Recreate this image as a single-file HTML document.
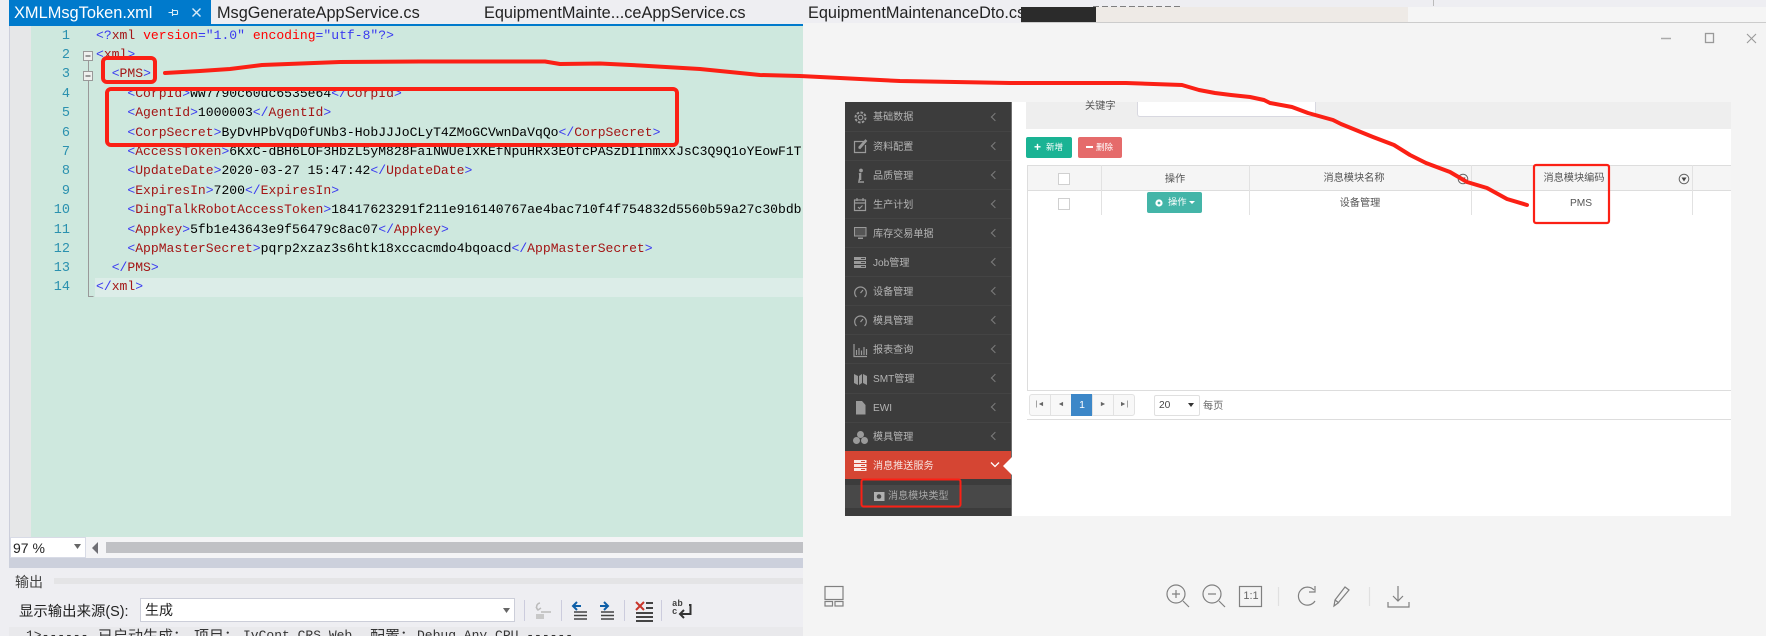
<!DOCTYPE html>
<html lang="zh"><head><meta charset="utf-8"><title>XML</title>
<style>
html,body{margin:0;padding:0;background:#eeeef2}
#p{position:relative;width:1766px;height:636px;overflow:hidden;background:#eeeef2;font-family:"Liberation Sans","Noto Sans CJK SC",sans-serif}
#p div,#p svg{position:absolute}
.tab{top:2px;font-size:16.3px;line-height:22px;color:#222;white-space:nowrap}
.ln{left:40px;width:30px;margin-top:1px;text-align:right;color:#2b91af;font:13.5px/20px "Liberation Mono",monospace}
.c{left:96px;width:707px;overflow:hidden;font:13.07px/20px "Liberation Mono","Noto Sans CJK SC",monospace;white-space:pre;color:#000}
.c b{font-weight:normal;color:#3a3af0}.c i{font-style:normal;color:#a31515}.c u{text-decoration:none;color:#f00}
.m{left:873px;font-size:10.1px;line-height:20px;color:#b4b4b4;white-space:nowrap}
.sep{left:845px;width:166px;height:1px;background:#444}
.ch{left:992px;width:5px;height:5px;border-left:1px solid #7c7c7c;border-bottom:1px solid #7c7c7c;transform:rotate(45deg)}
.t{font-size:10.2px;line-height:20px;color:#555;white-space:nowrap;text-align:center}
.ic{fill:none;stroke:#9a9a9a;stroke-width:1.2}
.cb{width:10px;height:10px;border:1px solid #d0d0d0;background:#fff}
.pg{top:394px;width:20px;height:20px;border:1px solid #e2e2e2;background:#f8f8f8;color:#666;font-size:7px;line-height:20px;text-align:center}
.v{background:#ccd}
.o{top:626px;font:13px/20px "Liberation Mono",monospace;color:#333;white-space:nowrap}
.oc{top:627px;font:15px/20px "Liberation Sans","Noto Sans CJK SC",sans-serif;color:#333;white-space:nowrap}
</style></head><body><div id="p">

<!-- tabs -->
<div style="left:9px;top:0;width:202px;height:25px;background:#007acc"></div>
<div class="tab" style="left:14px;color:#fff;font-size:16.4px">XMLMsgToken.xml</div>
<svg style="left:168px;top:7px" width="11" height="11"><path d="M0.500 5.500h3.500M4.500 2v7M4.500 3.500h5M4.500 7.500h5M9.500 3.500v4" fill="none" stroke="#d8ecf8" stroke-width="1.100"/></svg>
<svg style="left:191px;top:7px" width="12" height="12"><path d="M1.500 1.500l8 8M9.500 1.500l-8 8" stroke="#d8ecf8" stroke-width="1.400"/></svg>
<div class="tab" style="left:217px">MsgGenerateAppService.cs</div>
<div class="tab" style="left:484px">EquipmentMainte...ceAppService.cs</div>
<div class="tab" style="left:808px">EquipmentMaintenanceDto.cs</div>
<div style="left:9px;top:24px;width:794px;height:2px;background:#007acc"></div>

<!-- editor -->
<div style="left:9px;top:26px;width:1px;height:532px;background:#cccedb"></div>
<div style="left:10px;top:26px;width:21px;height:511px;background:#e6e7e8"></div>
<div style="left:31px;top:26px;width:772px;height:511px;background:#cee8de"></div>
<div style="left:95px;top:278px;width:708px;height:19px;background:#dcede8"></div>

<div class="ln" style="top:26px">1</div><div class="ln" style="top:45px">2</div><div class="ln" style="top:64px">3</div><div class="ln" style="top:84px">4</div><div class="ln" style="top:103px">5</div><div class="ln" style="top:123px">6</div><div class="ln" style="top:142px">7</div><div class="ln" style="top:161px">8</div><div class="ln" style="top:181px">9</div><div class="ln" style="top:200px">10</div><div class="ln" style="top:220px">11</div><div class="ln" style="top:239px">12</div><div class="ln" style="top:258px">13</div><div class="ln" style="top:277px">14</div>

<svg style="left:80px;top:45px" width="16" height="256"><rect x="3.500" y="6.500" width="9" height="9" fill="#eef0ee" stroke="#999"/><path d="M5.500 11h5" stroke="#444"/><rect x="3.500" y="26.500" width="9" height="9" fill="#eef0ee" stroke="#999"/><path d="M5.500 31h5" stroke="#444"/><path d="M8.500 16v10M8.500 36v215.500h5" fill="none" stroke="#999"/></svg>

<div class="c" style="top:26px"><b>&lt;?</b><i>xml</i> <u>version</u><b>="1.0"</b> <u>encoding</u><b>="utf-8"?&gt;</b></div>
<div class="c" style="top:45px"><b>&lt;</b><i>xml</i><b>&gt;</b></div>
<div class="c" style="top:64px">  <b>&lt;</b><i>PMS</i><b>&gt;</b></div>
<div class="c" style="top:84px">    <b>&lt;</b><i>CorpId</i><b>&gt;</b>ww7790c60dc6535e64<b>&lt;/</b><i>CorpId</i><b>&gt;</b></div>
<div class="c" style="top:103px">    <b>&lt;</b><i>AgentId</i><b>&gt;</b>1000003<b>&lt;/</b><i>AgentId</i><b>&gt;</b></div>
<div class="c" style="top:123px">    <b>&lt;</b><i>CorpSecret</i><b>&gt;</b>ByDvHPbVqD0fUNb3-HobJJJoCLyT4ZMoGCVwnDaVqQo<b>&lt;/</b><i>CorpSecret</i><b>&gt;</b></div>
<div class="c" style="top:142px">    <b>&lt;</b><i>AccessToken</i><b>&gt;</b>6KxC-dBH6LOF3HbzL5yM828FaiNWUeIxKEfNpuHRx3EOfcPASzDIInmxxJsC3Q9Q1oYEowF1T</div>
<div class="c" style="top:161px">    <b>&lt;</b><i>UpdateDate</i><b>&gt;</b>2020-03-27 15:47:42<b>&lt;/</b><i>UpdateDate</i><b>&gt;</b></div>
<div class="c" style="top:181px">    <b>&lt;</b><i>ExpiresIn</i><b>&gt;</b>7200<b>&lt;/</b><i>ExpiresIn</i><b>&gt;</b></div>
<div class="c" style="top:200px">    <b>&lt;</b><i>DingTalkRobotAccessToken</i><b>&gt;</b>18417623291f211e916140767ae4bac710f4f754832d5560b59a27c30bdb</div>
<div class="c" style="top:220px">    <b>&lt;</b><i>Appkey</i><b>&gt;</b>5fb1e43643e9f56479c8ac07<b>&lt;/</b><i>Appkey</i><b>&gt;</b></div>
<div class="c" style="top:239px">    <b>&lt;</b><i>AppMasterSecret</i><b>&gt;</b>pqrp2xzaz3s6htk18xccacmdo4bqoacd<b>&lt;/</b><i>AppMasterSecret</i><b>&gt;</b></div>
<div class="c" style="top:258px">  <b>&lt;/</b><i>PMS</i><b>&gt;</b></div>
<div class="c" style="top:277px"><b>&lt;/</b><i>xml</i><b>&gt;</b></div>

<!-- zoom + scrollbar -->
<div style="left:10px;top:537px;width:793px;height:21px;background:#f4f4f6"></div>
<div style="left:10px;top:537px;width:74px;height:19px;background:#fff;border:1px solid #d8dbe6"></div>
<div style="left:13px;top:538px;font-size:14px;line-height:20px;color:#222">97 %</div>
<svg style="left:74px;top:544px" width="8" height="6"><path d="M0 0h7l-3.500 5z" fill="#666"/></svg>
<svg style="left:91px;top:541px" width="8" height="14"><path d="M7 1v12L1 7z" fill="#6e6e74"/></svg>
<div style="left:106px;top:542px;width:697px;height:11px;background:#c0c1c5"></div>
<div style="left:9px;top:558px;width:794px;height:10px;background:#ccd0dc"></div>

<!-- output panel -->
<div style="left:15px;top:572px;font-size:14px;line-height:20px;color:#444">输出</div>
<div style="left:54px;top:578px;width:749px;height:6px;background-image:radial-gradient(#c4c4c4 0.6px,transparent 0.7px);background-size:2px 2px"></div>
<div style="left:19px;top:602px;font-size:14.4px;line-height:20px;color:#222;white-space:nowrap">显示输出来源(S):</div>
<div style="left:140px;top:598px;width:373px;height:22px;background:#fff;border:1px solid #ccced9"></div>
<div style="left:145px;top:600px;font-size:14px;line-height:20px;color:#222">生成</div>
<svg style="left:503px;top:608px" width="8" height="6"><path d="M0 0h7l-3.500 5z" fill="#666"/></svg>
<div class="v" style="left:524px;top:600px;width:1px;height:21px"></div>
<div class="v" style="left:561px;top:600px;width:1px;height:21px"></div>
<div class="v" style="left:624px;top:600px;width:1px;height:21px"></div>
<div class="v" style="left:661px;top:600px;width:1px;height:21px"></div>
<svg style="left:533px;top:600px" width="20" height="22"><path d="M7 3a4 4 0 0 0-2 7M3 7l2 3 3-2" fill="none" stroke="#bbb" stroke-width="1.500"/><path d="M8 12h10" stroke="#bbb" stroke-width="1.500"/><path d="M3 14h8v5H3z" fill="#c8c8c8"/></svg>
<svg style="left:571px;top:600px" width="18" height="22"><path d="M10 6H3M6 2L2 6l4 4" fill="none" stroke="#0e5fa8" stroke-width="2"/><path d="M3 12h13M3 15.500h13M3 19h13" stroke="#444" stroke-width="1.600"/></svg>
<svg style="left:598px;top:600px" width="18" height="22"><path d="M2 6h7M6 2l4 4-4 4" fill="none" stroke="#0e5fa8" stroke-width="2"/><path d="M3 12h13M3 15.500h13M3 19h13" stroke="#444" stroke-width="1.600"/></svg>
<svg style="left:635px;top:600px" width="20" height="24"><path d="M1 2l8 8M9 2l-8 8" stroke="#c8352b" stroke-width="2"/><path d="M11 3h7M11 8h7M1 13h17M1 17h17M1 21h17" stroke="#444" stroke-width="2"/></svg>
<div style="left:672px;top:600px;font:bold 9px/8px 'Liberation Mono',monospace;color:#444">ab<br>c</div>
<svg style="left:678px;top:603px" width="14" height="16"><path d="M11 2h1.500v9H3M6 7l-4 4 4 4" fill="none" stroke="#333" stroke-width="2"/></svg>
<div style="left:9px;top:627px;width:794px;height:9px;background:#e9e9ec"></div>
<div class="o" style="left:26px">1&gt;------</div>
<div class="oc" style="left:98px">已启动生成：</div>
<div class="oc" style="left:194px">项目：</div>
<div class="o" style="left:243px">IvCont.CRS.Web,</div>
<div class="oc" style="left:370px">配置：</div>
<div class="o" style="left:417px">Debug Any CPU ------</div>

<!-- viewer -->
<div style="left:803px;top:23px;width:963px;height:613px;background:#f4f4f4"></div>
<div style="left:1021px;top:7px;width:745px;height:15px;background:#f5f5f5"></div>
<div style="left:1096px;top:7px;width:312px;height:15px;background:#eeeae6"></div>
<div style="left:1021px;top:7px;width:75px;height:15px;background:#2b2b2b"></div>
<div style="left:1093px;top:5.500px;width:88px;height:1.500px;opacity:.6;background:repeating-linear-gradient(90deg,#333 0 6px,transparent 6px 9px)"></div>
<div style="left:1021px;top:22px;width:745px;height:1px;background:#ccc"></div>
<div style="left:1433px;top:0;width:1px;height:6px;background:#bbb"></div>
<svg style="left:1655px;top:28px" width="105" height="20"><path d="M6 10.500h10" stroke="#aaa" stroke-width="1.500"/><rect x="50.500" y="5.500" width="8" height="9" fill="none" stroke="#999" stroke-width="1.300"/><path d="M92 6l9 9M101 6l-9 9" stroke="#999" stroke-width="1.100"/></svg>

<!-- screenshot in viewer -->
<div style="left:1012px;top:102px;width:719px;height:414px;background:#fff"></div>
<div style="left:1026px;top:102px;width:705px;height:27px;background:#eee"></div>
<div class="t" style="left:1085px;top:97px;color:#555">关键字</div>
<div style="left:1137px;top:102px;width:177px;height:14px;background:#fff;border:1px solid #d8d8e0;border-top:0;border-radius:0 0 3px 3px"></div>

<div style="left:1026px;top:137px;width:46px;height:21px;background:#1ab394;border-radius:2px"></div>
<div style="left:1034px;top:137px;color:#fff;font:bold 12px/21px 'Liberation Sans',sans-serif">+</div>
<div class="t" style="left:1046px;top:137px;color:#fff;font-size:8.500px">新增</div>
<div style="left:1078px;top:137px;width:44px;height:21px;background:#e56b6b;border-radius:2px"></div>
<div style="left:1086px;top:146px;width:7px;height:2px;background:#fff"></div>
<div class="t" style="left:1096px;top:137px;color:#fff;font-size:8.500px">删除</div>

<div style="left:1027px;top:165px;width:704px;height:25px;background:#f5f5f5"></div>
<div style="left:1027px;top:165px;width:704px;height:1px;background:#ddd"></div>
<div style="left:1027px;top:190px;width:704px;height:1px;background:#ddd"></div>
<div style="left:1027px;top:165px;width:1px;height:255px;background:#ddd"></div>
<div style="left:1101px;top:165px;width:1px;height:50px;background:#e2e2e2"></div>
<div style="left:1249px;top:165px;width:1px;height:50px;background:#e2e2e2"></div>
<div style="left:1471px;top:165px;width:1px;height:50px;background:#e2e2e2"></div>
<div style="left:1692px;top:165px;width:1px;height:50px;background:#e2e2e2"></div>
<div class="cb" style="left:1058px;top:173px"></div>
<div class="cb" style="left:1058px;top:198px"></div>
<div class="t" style="left:1155px;top:170px;width:40px">操作</div>
<div class="t" style="left:1314px;top:169px;width:80px">消息模块名称</div>
<div class="t" style="left:1534px;top:169px;width:80px">消息模块编码</div>
<svg style="left:1457px;top:173px" width="12" height="12"><circle cx="6" cy="6" r="4.800" fill="none" stroke="#666"/><path d="M3.500 4.500h5L6 8.500z" fill="#444"/></svg>
<svg style="left:1678px;top:173px" width="12" height="12"><circle cx="6" cy="6" r="4.800" fill="none" stroke="#666"/><path d="M3.500 4.500h5L6 8.500z" fill="#444"/></svg>
<div style="left:1147px;top:192px;width:55px;height:21px;background:#44b5a8;border-radius:2px"></div>
<svg style="left:1154px;top:198px" width="10" height="10"><circle cx="5" cy="5" r="2.500" fill="none" stroke="#fff" stroke-width="2.200"/></svg>
<div class="t" style="left:1168px;top:192px;color:#fff;font-size:9.300px">操作</div>
<svg style="left:1189px;top:201px" width="6" height="4"><path d="M0 0h6L3 3z" fill="#fff"/></svg>
<div class="t" style="left:1320px;top:194px;width:80px">设备管理</div>
<div class="t" style="left:1561px;top:194px;width:40px">PMS</div>

<div style="left:1027px;top:390px;width:704px;height:1px;background:#ddd"></div>
<div style="left:1027px;top:391px;width:704px;height:28px;background:#fff"></div>
<div style="left:1027px;top:419px;width:704px;height:1px;background:#ddd"></div>
<div class="pg" style="left:1029px;border-radius:3px 0 0 3px">|◄</div>
<div class="pg" style="left:1050px">◄</div>
<div class="pg" style="left:1071px;background:#3c87c8;border-color:#3c87c8;color:#fff;font-size:10.500px">1</div>
<div class="pg" style="left:1092px">►</div>
<div class="pg" style="left:1113px;border-radius:0 3px 3px 0">►|</div>
<div style="left:1154px;top:395px;width:44px;height:19px;background:#fff;border:1px solid #e0e0e0;border-radius:2px"></div>
<div class="t" style="left:1159px;top:396px;color:#444">20</div>
<svg style="left:1188px;top:403px" width="7" height="5"><path d="M0 0h6L3 4z" fill="#333"/></svg>
<div class="t" style="left:1203px;top:397px;color:#666">每页</div>

<!-- sidebar -->
<div style="left:845px;top:102px;width:166px;height:414px;background:#3c3c3c"></div>
<div style="left:1011px;top:102px;width:1px;height:414px;background:#707070"></div>
<div class="sep" style="top:131px"></div><div class="sep" style="top:160px"></div><div class="sep" style="top:189px"></div><div class="sep" style="top:218px"></div><div class="sep" style="top:247px"></div><div class="sep" style="top:276px"></div><div class="sep" style="top:305px"></div><div class="sep" style="top:334px"></div><div class="sep" style="top:363px"></div><div class="sep" style="top:393px"></div><div class="sep" style="top:422px"></div>

<div class="m" style="top:108px">基础数据</div><div class="ch" style="top:114px"></div>
<div class="m" style="top:138px">资料配置</div><div class="ch" style="top:143px"></div>
<div class="m" style="top:167px">品质管理</div><div class="ch" style="top:172px"></div>
<div class="m" style="top:196px">生产计划</div><div class="ch" style="top:201px"></div>
<div class="m" style="top:225px">库存交易单据</div><div class="ch" style="top:230px"></div>
<div class="m" style="top:254px">Job管理</div><div class="ch" style="top:259px"></div>
<div class="m" style="top:283px">设备管理</div><div class="ch" style="top:288px"></div>
<div class="m" style="top:312px">模具管理</div><div class="ch" style="top:317px"></div>
<div class="m" style="top:341px">报表查询</div><div class="ch" style="top:346px"></div>
<div class="m" style="top:370px">SMT管理</div><div class="ch" style="top:375px"></div>
<div class="m" style="top:399px">EWI</div><div class="ch" style="top:404px"></div>
<div class="m" style="top:428px">模具管理</div><div class="ch" style="top:433px"></div>

<div style="left:845px;top:451px;width:166px;height:28px;background:#d54533"></div>
<div class="m" style="top:457px;color:#f6e3df">消息推送服务</div>
<svg style="left:990px;top:461px" width="10" height="8"><path d="M1 1.500l4 4 4-4" fill="none" stroke="#fff" stroke-width="1.300"/></svg>
<svg style="left:1003px;top:457px" width="9" height="18"><path d="M9 0v18L0 9z" fill="#fff"/></svg>
<div style="left:845px;top:485px;width:166px;height:23px;background:#484848"></div>
<div class="m" style="left:888px;top:487px;color:#a8a8a8">消息模块类型</div>

<!-- sidebar icons -->
<svg class="ic" style="left:853px;top:110px" width="15" height="15"><circle cx="7.500" cy="7.500" r="2.300"/><circle cx="7.500" cy="7.500" r="5" stroke-dasharray="2.500 1.400" stroke-width="2"/></svg>
<svg class="ic" style="left:853px;top:139px" width="15" height="15"><path d="M11 2.500H1.500v11h11V6"/><path d="M6 9l1 .5L13.500 2 12.500 1 6 8z" fill="#9a9a9a"/></svg>
<svg class="ic" style="left:853px;top:168px" width="15" height="16"><path d="M7.500 5v7M5 14h6M6 13c1-3 1-6 .5-8" stroke-width="1.600"/><circle cx="8" cy="2.500" r="1.300" fill="#9a9a9a"/></svg>
<svg class="ic" style="left:853px;top:197px" width="15" height="15"><rect x="1.500" y="3" width="11" height="10.500"/><path d="M1.500 6h11M4 1v3M10 1v3M5 10l1.500 1.500L9.500 8.500"/></svg>
<svg style="left:853px;top:226px" width="15" height="15"><path d="M1 1h12.500v9.500H1zM5 11.500h5v1.500H5z" fill="#9a9a9a"/><rect x="2" y="2" width="10.500" height="7.500" fill="#555"/></svg>
<svg style="left:853px;top:256px" width="15" height="13"><path d="M1 1h12v3H1zM1 5h12v3H1zM1 9h12v3H1z" fill="#9a9a9a"/><path d="M8 2.500h4M8 6.500h4M8 10.500h4" stroke="#444"/></svg>
<svg class="ic" style="left:853px;top:285px" width="15" height="15"><path d="M3.500 12a5.800 5.800 0 1 1 8 0M7.500 8l2.500-3"/></svg>
<svg class="ic" style="left:853px;top:314px" width="15" height="15"><path d="M3.500 12a5.800 5.800 0 1 1 8 0M7.500 8l2.500-3"/></svg>
<svg class="ic" style="left:853px;top:343px" width="15" height="15"><path d="M1 1v12.500h13M3.500 12V7M6 12V5M8.500 12V7.500M11 12V4M13.500 12V6"/></svg>
<svg style="left:853px;top:372px" width="15" height="15"><path d="M1 2l4 2v9l-4-2zM6 4l3-2v9l-3 2zM10 2l4 2v9l-4-2z" fill="#9a9a9a"/></svg>
<svg style="left:854px;top:400px" width="13" height="15"><path d="M2 1h6l3.500 4v9.500H2z" fill="#9a9a9a"/></svg>
<svg style="left:852px;top:430px" width="17" height="15"><circle cx="8.500" cy="4.500" r="3.500" fill="#9a9a9a"/><circle cx="4.500" cy="10.500" r="3.500" fill="#9a9a9a"/><circle cx="12.500" cy="10.500" r="3.500" fill="#9a9a9a"/></svg>
<svg style="left:853px;top:459px" width="15" height="13"><path d="M1 1h12.500v3H1zM1 5h12.500v3H1zM1 9h12.500v3H1z" fill="#fbe9e5"/><path d="M8 2.500h4M8 6.500h4M8 10.500h4" stroke="#d54533"/></svg>
<svg style="left:873px;top:491px" width="12" height="11"><path d="M1 1h10.500v9H1z" fill="#b0b0b0"/><circle cx="6" cy="5.500" r="2.300" fill="#484848"/></svg>

<!-- bottom toolbar icons -->
<svg style="left:820px;top:580px" width="600" height="32" fill="none" stroke="#808080" stroke-width="1.200">
<rect x="5" y="6.500" width="18" height="13"/><rect x="5" y="21.500" width="7.500" height="4.500"/><rect x="15" y="21.500" width="8" height="4.500"/>
<circle cx="356" cy="14" r="9"/><path d="M363 21l6 6M352 14h8M356 10v8"/>
<circle cx="392" cy="14" r="9"/><path d="M399 21l6 6M388 14h8"/>
<rect x="419.500" y="6.500" width="22" height="20"/>
<path d="M458.500 7v19M549.500 7v19" stroke="#e0e0e0"/>
<path d="M494 10a9 9 0 1 0 1 11M495 6v6h-6"/>
<path d="M514 26l1-6 10-13 4 3-11 13zM515 20l4 3"/>
<path d="M578 6v15M573 16l5 5 5-5M568 22v5h21v-5"/>
</svg>
<div style="left:1240px;top:586px;width:22px;height:20px;font:11px/20px 'Liberation Sans',sans-serif;text-align:center;color:#666">1:1</div>

<!-- red annotations -->
<svg style="left:0;top:0" width="1766" height="636" fill="none" stroke="#fb2015" stroke-linejoin="round" stroke-linecap="round">
<rect x="103" y="58" width="52" height="24" rx="4" stroke-width="4"/>
<rect x="107" y="89" width="570" height="56" rx="4" stroke-width="4"/>
<path d="M165 73L200 71L230 69L262 65L340 62L420 61.500L545 61.500L560 64L600 63.500L640 65.500L700 69L760 75L800 76L820 77L900 81L1010 83L1126 83L1182 85L1199 90L1215 93L1231 95L1250 97L1264 100L1270 103L1292 107L1308 113L1333 120L1341 124L1373 137L1394 145L1410 155L1426 163L1450 172L1467 182L1487 188L1507 199L1527 205" stroke-width="4"/>
<rect x="1534" y="165" width="75" height="58" rx="2" stroke-width="2.200"/>
<rect x="861.500" y="479.500" width="99" height="27" rx="2" stroke-width="2"/>
</svg>
</div></body></html>
